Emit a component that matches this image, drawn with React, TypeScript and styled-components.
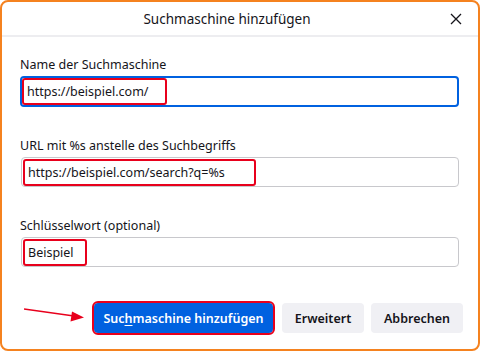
import React from "react";
import styled, { createGlobalStyle } from "styled-components";

const Global = createGlobalStyle`
  html, body { margin: 0; padding: 0; background: #ffffff; }
  * { box-sizing: border-box; }
  body { font-family: "Noto Sans", "Open Sans", Arial, sans-serif; color: #15141a; }
`;

const Dialog = styled.div`
  width: 480px;
  height: 351px;
  border: 2px solid #f5821f;
  border-radius: 8px;
  background: #ffffff;
  display: flex;
  flex-direction: column;
  overflow: hidden;
`;

const Header = styled.div`
  height: 35px;
  border-bottom: 2px solid #ededf0;
  display: grid;
  grid-template-columns: 1fr 26px;
  align-items: center;
`;

const Title = styled.div`
  text-align: center;
  font-size: 13.5px;
  padding-top: 1px;
`;

const Close = styled.button`
  width: 14px;
  height: 14px;
  padding: 0;
  border: none;
  background: none;
  display: flex;
  align-items: center;
  justify-content: center;
  margin-left: -3px;
`;

const Body = styled.div`
  flex: 1;
  padding: 19px 19px 0 18px;
  display: flex;
  flex-direction: column;
`;

const Field = styled.div<{ $gap?: number }>`
  display: flex;
  flex-direction: column;
  margin-bottom: ${(p) => p.$gap ?? 30}px;
`;

const Label = styled.div`
  font-size: 12.5px;
  line-height: 18px;
  margin-bottom: 2px;
`;

const Input = styled.div<{ $focused?: boolean }>`
  border: ${(p) => (p.$focused ? "2px solid #0061e0" : "1px solid #c8c8cc")};
  border-radius: 4px;
  display: flex;
  align-items: center;
  padding-left: ${(p) => (p.$focused ? 0 : 1)}px;
  margin-left: ${(p) => (p.$focused ? 0 : 1)}px;
  height: ${(p) => (p.$focused ? 31 : 30)}px;
`;

const Highlight = styled.span<{ $width: number }>`
  height: 27px;
  width: ${(p) => p.$width}px;
  border: 2px solid #e8001c;
  border-radius: 3px;
  padding: 0 0 0 3px;
  display: inline-flex;
  align-items: center;
  font-size: 12.5px;
  white-space: nowrap;
`;

const Actions = styled.div`
  margin-top: auto;
  margin-bottom: 16px;
  margin-right: -4px;
  display: flex;
  align-items: center;
  justify-content: flex-end;
`;

const Arrow = styled.svg`
  width: 62px;
  height: 20px;
  margin-left: 4px;
  margin-right: auto;
  flex-shrink: 0;
`;

const Button = styled.button<{ $primary?: boolean; $width: number; $gap: number }>`
  height: 30px;
  width: ${(p) => p.$width}px;
  border: none;
  border-radius: 4px;
  font-family: inherit;
  font-size: 12.5px;
  font-weight: 600;
  padding: 0;
  background: ${(p) => (p.$primary ? "#0061e0" : "#f0f0f4")};
  color: ${(p) => (p.$primary ? "#ffffff" : "#15141a")};
  outline: ${(p) => (p.$primary ? "2px solid #e8001c" : "none")};
  margin-right: ${(p) => p.$gap}px;
`;

const AccessKey = styled.span`
  text-decoration: underline;
  text-underline-offset: 2px;
`;

export default function App() {
  return (
    <>
      <Global />
      <Dialog>
        <Header>
          <Title>Suchmaschine hinzufügen</Title>
          <Close aria-label="Schließen">
            <svg width="12" height="12" viewBox="0 0 12 12">
              <path d="M1 1L11 11M11 1L1 11" stroke="#15141a" strokeWidth="1.3" />
            </svg>
          </Close>
        </Header>
        <Body>
          <Field>
            <Label>Name der Suchmaschine</Label>
            <Input $focused>
              <Highlight $width={145}>https://beispiel.com/</Highlight>
            </Input>
          </Field>
          <Field>
            <Label>URL mit %s anstelle des Suchbegriffs</Label>
            <Input>
              <Highlight $width={233}>https://beispiel.com/search?q=%s</Highlight>
            </Input>
          </Field>
          <Field $gap={0}>
            <Label>Schlüsselwort (optional)</Label>
            <Input>
              <Highlight $width={64}>Beispiel</Highlight>
            </Input>
          </Field>
          <Actions>
            <Arrow viewBox="0 0 62 20">
              <line x1="0" y1="1" x2="50" y2="8" stroke="#e8001c" strokeWidth="1.5" />
              <polygon points="60,9.5 48,3.5 46.5,13.5" fill="#e8001c" />
            </Arrow>
            <Button $primary $width={179} $gap={9}>
              Suc<AccessKey>h</AccessKey>maschine hinzufügen
            </Button>
            <Button $width={82} $gap={7}>Erweitert</Button>
            <Button $width={92} $gap={0}>Abbrechen</Button>
          </Actions>
        </Body>
      </Dialog>
    </>
  );
}
